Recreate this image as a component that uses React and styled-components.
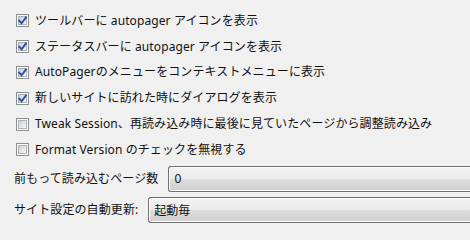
import { createGlobalStyle, styled, css } from "styled-components"

const GlobalStyle = createGlobalStyle`
  html, body {
    margin: 0;
    padding: 0;
    background: #f0f0f0;
    overflow: hidden;
  }
  body {
    font-family: "Noto Sans", "Noto Sans CJK JP", sans-serif;
    font-size: 12px;
    color: #111111;
  }
`

const Panel = styled.div`
  width: 470px;
  height: 240px;
  padding-top: 8px;
  box-sizing: border-box;
  display: flex;
  flex-direction: column;
  overflow: hidden;
`

const CheckRow = styled.label`
  display: flex;
  align-items: center;
  gap: 6px;
  height: 25.8px;
  padding-left: 16px;
  white-space: nowrap;
`

const Box = styled.span`
  position: relative;
  width: 13px;
  height: 13px;
  box-sizing: border-box;
  flex: none;
  border: 1px solid #8e8f8f;
  background: #ffffff;
  &::before {
    content: "";
    position: absolute;
    inset: 1px;
    border: 1px solid #aeb3b9;
    background: linear-gradient(135deg, #cbcfd5 0%, #e6e8eb 60%, #f6f6f6 100%);
  }
`

const Tick = styled.svg`
  position: absolute;
  left: 1px;
  top: 1px;
  width: 9px;
  height: 9px;
`

const Label = styled.span`
  line-height: 1;
  letter-spacing: 0.1px;
`

const FieldRow = styled.div`
  display: flex;
  align-items: center;
  gap: ${(p) => p.$gap}px;
  padding-left: 14px;
  margin-top: ${(p) => p.$top}px;
  white-space: nowrap;
`

const buttonFace = css`
  background: linear-gradient(
    to bottom,
    #f2f2f2 0%,
    #ebebeb 48%,
    #dddddd 52%,
    #cfcfcf 100%
  );
`

const Field = styled.div`
  flex: 1;
  height: 26px;
  box-sizing: border-box;
  border: 1px solid #707070;
  border-right: none;
  border-radius: 3px 0 0 3px;
  box-shadow: inset 1px 1px 0 #fcfcfc, inset 0 -1px 0 #fcfcfc;
  ${buttonFace}
  display: flex;
  align-items: center;
  padding-left: 5px;
`

const Check = ({ checked, children }) => (
  <CheckRow>
    <Box>
      {checked && (
        <Tick viewBox="0 0 9 9">
          <path
            d="M1.2 4.6 L3.6 7.2 L8 1.4"
            fill="none"
            stroke="#2b4fa8"
            strokeWidth="1.9"
            strokeLinecap="square"
          />
        </Tick>
      )}
    </Box>
    <Label>{children}</Label>
  </CheckRow>
)

export default function App() {
  return (
    <>
      <GlobalStyle />
      <Panel>
        <Check checked>ツールバーに autopager アイコンを表示</Check>
        <Check checked>ステータスバーに autopager アイコンを表示</Check>
        <Check checked>AutoPagerのメニューをコンテキストメニューに表示</Check>
        <Check checked>新しいサイトに訪れた時にダイアログを表示</Check>
        <Check>Tweak Session、再読み込み時に最後に見ていたページから調整読み込み</Check>
        <Check>Format Version のチェックを無視する</Check>
        <FieldRow $gap={10} $top={3}>
          <Label>前もって読み込むページ数</Label>
          <Field>0</Field>
        </FieldRow>
        <FieldRow $gap={10} $top={5}>
          <Label>サイト設定の自動更新:</Label>
          <Field>起動毎</Field>
        </FieldRow>
      </Panel>
    </>
  )
}
